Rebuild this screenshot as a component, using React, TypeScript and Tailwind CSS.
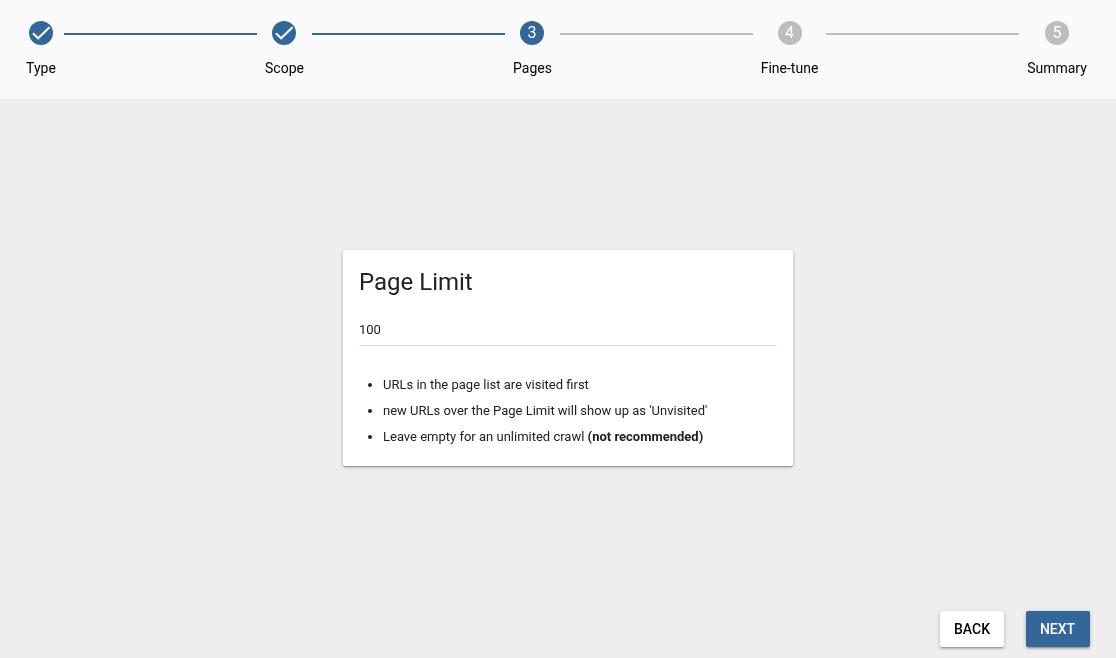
const steps = ['Type', 'Scope', 'Pages', 'Fine-tune', 'Summary'];
const widths = ['w-[30px]', 'w-[38px]', 'w-[38px]', 'w-[57px]', 'w-[60px]'];

function Step({ index }: { index: number }) {
  const active = index <= 2;
  const nudge = index === 1 || index === 2 ? 'pl-px' : '';
  return (
    <div className={`flex shrink-0 flex-col items-center ${widths[index]}`}>
      <div className={`flex h-6 w-6 items-center justify-center rounded-full text-base leading-6 text-white ${active ? 'bg-[#336699]' : 'bg-[#bdbdbd]'}`}>
        {index < 2 ? (
          <svg viewBox="0 0 24 24" className="h-6 w-6" fill="none" stroke="currentColor" strokeWidth="2">
            <path d="M3.9 12.2L9.1 17.3L20.5 6.3" />
          </svg>
        ) : (
          index + 1
        )}
      </div>
      <div className={`mt-[13px] whitespace-nowrap text-sm leading-[21px] text-black ${nudge}`}>{steps[index]}</div>
    </div>
  );
}

function Line({ active, className }: { active: boolean; className: string }) {
  return <div className={`mt-3 h-0.5 w-[193px] shrink-0 ${className} ${active ? 'bg-[#336699]' : 'bg-[#bdbdbd]'}`} />;
}

export default function App() {
  return (
    <div className="flex h-[658px] w-[1116px] flex-col overflow-hidden bg-[#eeeeee] font-['Roboto',sans-serif] text-[13px] text-[#212121] antialiased will-change-transform">
      <header className="flex h-[99px] shrink-0 items-start border-b border-[#f3f3f3] bg-[#fafafa] pt-[21px] pl-[26px]">
        <Step index={0} />
        <Line active className="mr-2 ml-2" />
        <Step index={1} />
        <Line active className="mr-2 ml-[9px]" />
        <Step index={2} />
        <Line active={false} className="mr-2 ml-[9px]" />
        <Step index={3} />
        <Line active={false} className="mr-2 ml-2" />
        <Step index={4} />
      </header>
      <main className="flex flex-1 flex-col pt-[151px]">
        <section className="ml-[343px] h-[216px] w-[450px] rounded-[2px] bg-white px-4 pt-4 shadow-[0_1px_4px_0_rgba(0,0,0,0.2),0_1px_1px_0_rgba(0,0,0,0.14),0_2px_2px_-1px_rgba(0,0,0,0.2)]">
          <h1 className="text-2xl leading-8">Page Limit</h1>
          <input className="mt-4 block h-8 w-full border-b border-[#dfdfdf] bg-transparent text-[13px] outline-none" defaultValue="100" />
          <ul className="mt-[26px] list-disc pl-6 leading-[26px]">
            <li>URLs in the page list are visited first</li>
            <li>new URLs over the Page Limit will show up as 'Unvisited'</li>
            <li>Leave empty for an unlimited crawl <b>(not recommended)</b></li>
          </ul>
        </section>
      </main>
      <footer className="flex shrink-0 justify-end gap-[22px] pr-[26px] pb-[11px] text-sm font-medium">
        <button className="h-9 w-16 rounded-[2px] bg-white text-black shadow-[0_1px_4px_0_rgba(0,0,0,0.2),0_2px_2px_0_rgba(0,0,0,0.14),0_2px_1px_-1px_rgba(0,0,0,0.12)]">BACK</button>
        <button className="h-9 w-16 rounded-[2px] bg-[#336699] pr-px text-white shadow-[0_1px_4px_0_rgba(0,0,0,0.2),0_2px_2px_0_rgba(0,0,0,0.14),0_2px_1px_-1px_rgba(0,0,0,0.12)]">NEXT</button>
      </footer>
    </div>
  );
}
